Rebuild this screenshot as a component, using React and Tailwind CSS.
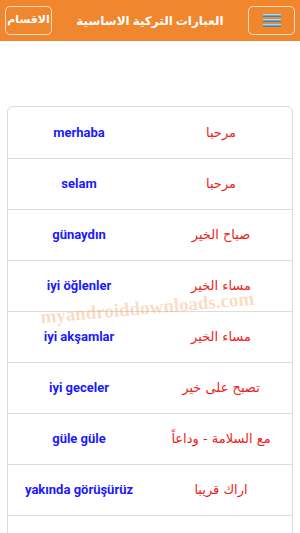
import React from "react";

const rows = [
  { tr: "merhaba", ar: "مرحبا" },
  { tr: "selam", ar: "مرحبا" },
  { tr: "günaydın", ar: "صباح الخير" },
  { tr: "iyi öğlenler", ar: "مساء الخير" },
  { tr: "iyi akşamlar", ar: "مساء الخير" },
  { tr: "iyi geceler", ar: "تصبح على خير" },
  { tr: "güle güle", ar: "مع السلامة - وداعاً" },
  { tr: "yakında görüşürüz", ar: "اراك قريبا" },
  { tr: "nasılsın", ar: "كيف حالك" },
];

export default function App() {
  return (
    <div className="w-[300px] h-[533px] overflow-hidden bg-white relative" style={{ fontFamily: "Roboto, 'DejaVu Sans', sans-serif" }}>
      {/* header */}
      <div className="h-[41px] bg-[#f0862e] flex items-center justify-between px-[5px]">
        <button className="w-[47px] h-[29px] border border-white/70 rounded-[5px] text-white text-[11px] font-bold flex items-center justify-center whitespace-nowrap">
          الاقسام
        </button>
        <div className="text-white text-[12px] font-bold whitespace-nowrap" dir="rtl">العبارات التركية الاساسية</div>
        <button className="w-[47px] h-[29px] border border-white/70 rounded-[5px] flex flex-col items-center justify-center gap-[2px]">
          <span className="block w-[18px] h-[3px] bg-gradient-to-b from-[#cfe9f7] via-[#5aaee0] to-[#2c6c9a]" />
          <span className="block w-[18px] h-[3px] bg-gradient-to-b from-[#cfe9f7] via-[#5aaee0] to-[#2c6c9a]" />
          <span className="block w-[18px] h-[3px] bg-gradient-to-b from-[#cfe9f7] via-[#5aaee0] to-[#2c6c9a]" />
        </button>
      </div>

      {/* table */}
      <div className="mt-[65px] mx-[7px] border border-[#dcdcdc] rounded-t-[6px]">
        {rows.map((r, i) => (
          <div key={i} className={`h-[51px] flex items-center ${i > 0 ? "border-t border-[#dcdcdc]" : ""}`}>
            <div className="w-1/2 text-center text-[#1a1aff] text-[13px] font-bold">{r.tr}</div>
            <div className="w-1/2 text-center text-[#ee1c1c] text-[13px]" dir="rtl" style={{ fontFamily: "'DejaVu Sans', sans-serif" }}>
              {r.ar}
            </div>
          </div>
        ))}
      </div>

      {/* watermark */}
      <div
        className="absolute left-[40px] top-[294px] text-[19px] font-bold text-[#f0862e]/30 -rotate-[5deg] pointer-events-none whitespace-nowrap"
        style={{ fontFamily: "'Liberation Serif', serif" }}
      >
        myandroiddownloads.com
      </div>
    </div>
  );
}
